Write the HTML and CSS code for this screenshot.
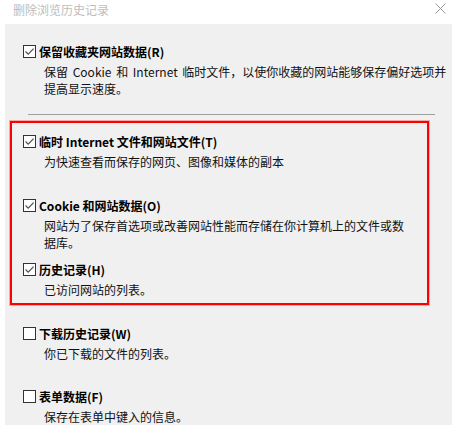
FILE: index.html
```html
<!DOCTYPE html>
<html lang="zh-CN">
<head>
<meta charset="utf-8">
<title>删除浏览历史记录</title>
<link rel="stylesheet" href="styles.css">
</head>
<body>
<div class="window">
  <div class="titlebar">
    <span class="title">删除浏览历史记录</span>
    <svg class="close" width="11" height="11" viewBox="0 0 11 11"><path d="M0.5 0.5 L10.5 10.5 M10.5 0.5 L0.5 10.5" stroke="#9a9a9a" stroke-width="1" fill="none"/></svg>
  </div>
  <div class="content">
    <div class="item first">
      <div class="label-row"><span class="cb checked"><svg width="11" height="11" viewBox="0 0 11 11"><path d="M1.5 5.5 L4.2 8.2 L9.6 2.6" stroke="#505050" stroke-width="1.2" fill="none"/></svg></span><span class="label">保留收藏夹网站数据(R)</span></div>
      <div class="desc wide">保留 Cookie 和 Internet 临时文件，以使你收藏的网站能够保存偏好选项并<br>提高显示速度。</div>
    </div>
    <div class="separator"></div>
    <div class="highlight">
      <div class="item">
        <div class="label-row"><span class="cb checked"><svg width="11" height="11" viewBox="0 0 11 11"><path d="M1.5 5.5 L4.2 8.2 L9.6 2.6" stroke="#505050" stroke-width="1.2" fill="none"/></svg></span><span class="label">临时 Internet 文件和网站文件(T)</span></div>
        <div class="desc">为快速查看而保存的网页、图像和媒体的副本</div>
      </div>
      <div class="item">
        <div class="label-row"><span class="cb checked"><svg width="11" height="11" viewBox="0 0 11 11"><path d="M1.5 5.5 L4.2 8.2 L9.6 2.6" stroke="#505050" stroke-width="1.2" fill="none"/></svg></span><span class="label">Cookie 和网站数据(O)</span></div>
        <div class="desc">网站为了保存首选项或改善网站性能而存储在你计算机上的文件或数<br>据库。</div>
      </div>
      <div class="item last">
        <div class="label-row"><span class="cb checked"><svg width="11" height="11" viewBox="0 0 11 11"><path d="M1.5 5.5 L4.2 8.2 L9.6 2.6" stroke="#505050" stroke-width="1.2" fill="none"/></svg></span><span class="label">历史记录(H)</span></div>
        <div class="desc">已访问网站的列表。</div>
      </div>
    </div>
    <div class="outside">
      <div class="item">
        <div class="label-row"><span class="cb"></span><span class="label">下载历史记录(W)</span></div>
        <div class="desc">你已下载的文件的列表。</div>
      </div>
      <div class="item">
        <div class="label-row"><span class="cb"></span><span class="label">表单数据(F)</span></div>
        <div class="desc">保存在表单中键入的信息。</div>
      </div>
    </div>
  </div>
</div>
</body>
</html>
```

FILE: styles.css
```css
html, body {
  margin: 0;
  padding: 0;
  background: #ffffff;
}
body {
  width: 452px;
  height: 425px;
  overflow: hidden;
  font-family: "Noto Sans CJK SC", "Noto Sans", sans-serif;
  font-size: 12px;
  color: #000;
}
.window {
  display: flex;
  flex-direction: column;
  height: 425px;
}
.titlebar {
  height: 24px;
  display: flex;
  justify-content: space-between;
  align-items: flex-start;
  background: #fff;
  padding: 0 6px 0 13px;
}
.title {
  line-height: 19px;
  color: #bdbdbd;
  font-size: 12px;
}
.close {
  margin-top: 3px;
}
.content {
  flex: 1;
  margin-left: 5px;
  background: #f0f0f0;
  padding-top: 19px;
  overflow: hidden;
}
.item {
  height: 64px;
  padding-left: 18px;
  box-sizing: border-box;
}
.item.first {
  height: 54px;
}
.item.last {
  height: 42px;
}
.label-row {
  display: flex;
  align-items: center;
  height: 17px;
}
.cb {
  width: 13px;
  height: 13px;
  box-sizing: border-box;
  border: 1px solid #333;
  background: #fff;
  display: flex;
  align-items: center;
  justify-content: center;
  margin-right: 3px;
  flex: none;
}
.cb svg {
  display: block;
}
.label {
  font-weight: bold;
  line-height: 17px;
  white-space: nowrap;
}
.desc {
  margin-top: 3px;
  padding-left: 21px;
  line-height: 17px;
  white-space: nowrap;
  color: #111;
}
.desc.wide {
  word-spacing: 2px;
}
.separator {
  height: 1px;
  background: #a0a0a0;
  margin: 17px 17px 0 23px;
}
.highlight {
  margin: 6px 23px 0 5px;
  border: 2px solid #ff0000;
  box-shadow: 0 0 0 1px rgba(255, 80, 80, 0.45);
  padding-top: 10px;
  padding-bottom: 0;
}
.highlight .item {
  padding-left: 11px;
}
.outside {
  margin-top: 20px;
}
.outside .item {
  height: 63px;
}
```
